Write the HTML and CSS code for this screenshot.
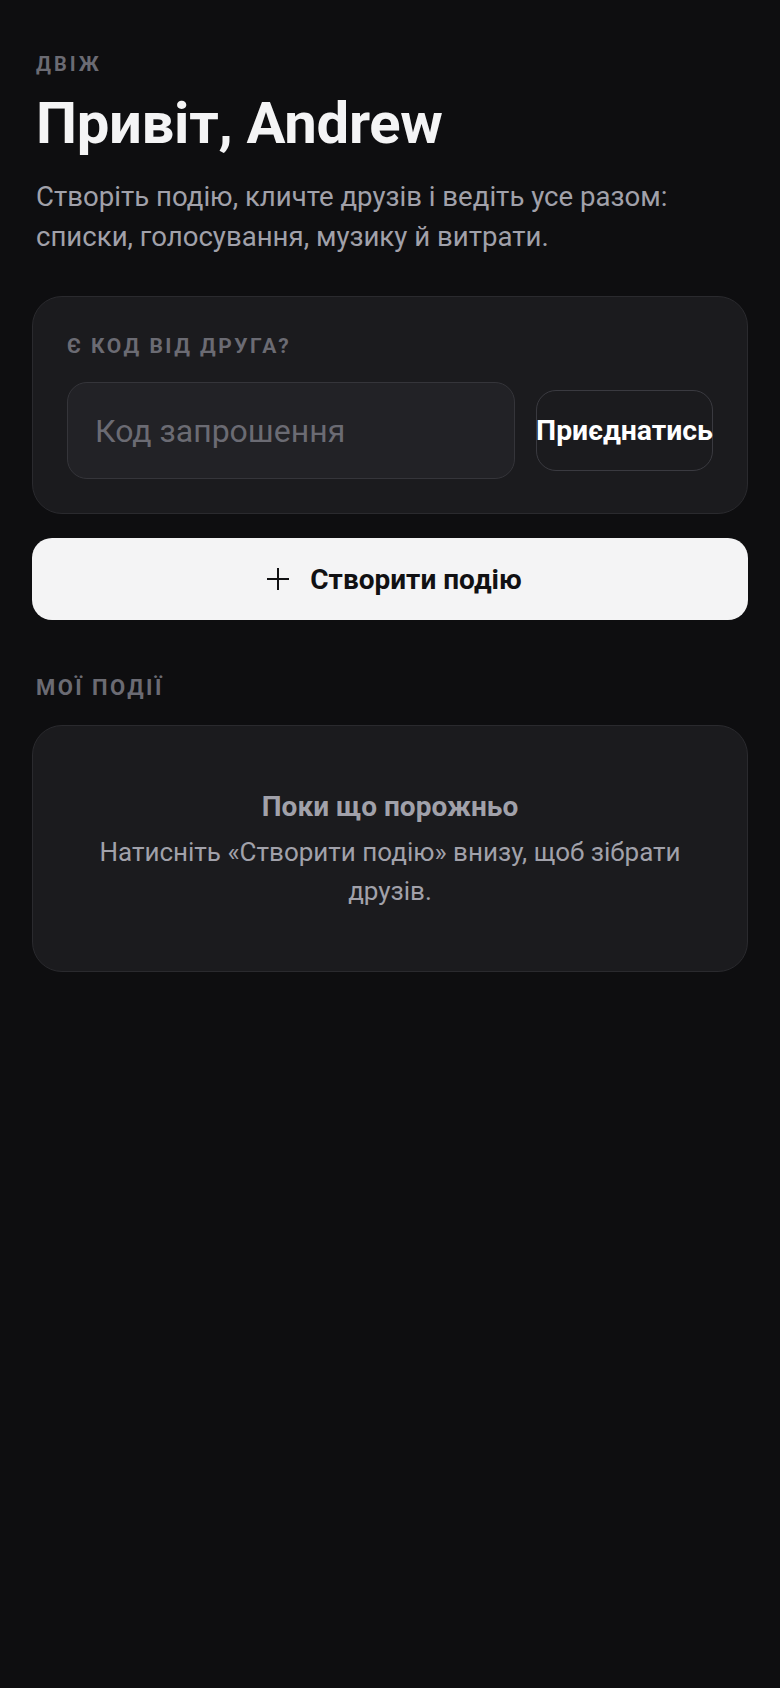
FILE: index.html
```html
<!DOCTYPE html>
<html lang="uk">
<head>
<meta charset="utf-8">
<meta name="viewport" content="width=device-width, initial-scale=1">
<title>Двіж</title>
<link rel="stylesheet" href="styles.css">
</head>
<body>
<main class="page">
  <header class="hero">
    <div class="brand">Двіж</div>
    <h1 class="title">Привіт, Andrew</h1>
    <p class="lead">Створіть подію, кличте друзів і ведіть усе разом: списки, голосування, музику й витрати.</p>
  </header>

  <section class="card join">
    <div class="label">Є код від друга?</div>
    <div class="join-row">
      <input class="code-input" type="text" placeholder="Код запрошення">
      <button class="join-btn" type="button">Приєднатись</button>
    </div>
  </section>

  <button class="create-btn" type="button">
    <svg class="plus" width="24" height="24" viewBox="0 0 24 24" aria-hidden="true">
      <path d="M12 1v22M1 12h22" stroke="#111113" stroke-width="2" fill="none"/>
    </svg>
    <span>Створити подію</span>
  </button>

  <div class="section-label">Мої події</div>

  <section class="card empty">
    <div class="empty-title">Поки що порожньо</div>
    <p class="empty-text">Натисніть «Створити подію» внизу, щоб зібрати друзів.</p>
  </section>
</main>
</body>
</html>
```

FILE: styles.css
```css
* {
  box-sizing: border-box;
}

html, body {
  margin: 0;
  padding: 0;
  background: #0e0e10;
}

body {
  font-family: Roboto, "Noto Sans", "Liberation Sans", sans-serif;
  color: #f4f4f5;
  min-height: 1688px;
}

.page {
  padding: 52px 32px 40px;
  display: flex;
  flex-direction: column;
}

.hero {
  padding: 0 4px;
  display: flex;
  flex-direction: column;
}

.brand {
  font-size: 20px;
  line-height: 24px;
  font-weight: 700;
  letter-spacing: 0.15em;
  text-transform: uppercase;
  color: #6b6b73;
}

.title {
  margin: 15px 0 0;
  font-size: 58px;
  line-height: 64px;
  font-weight: 700;
  letter-spacing: -0.005em;
  color: #f4f4f5;
}

.lead {
  margin: 22px 0 0;
  font-size: 27.6px;
  line-height: 40px;
  font-weight: 400;
  color: #a1a1aa;
}

.card {
  background: #1b1b1e;
  border: 1px solid #2a2a2e;
  border-radius: 30px;
}

.join {
  margin-top: 39px;
  padding: 37px 34px 34px;
}

.label {
  font-size: 21px;
  line-height: 24px;
  font-weight: 700;
  letter-spacing: 0.12em;
  text-transform: uppercase;
  color: #6b6b73;
}

.join-row {
  margin-top: 24px;
  display: flex;
  align-items: center;
  gap: 21px;
}

.code-input {
  flex: 1;
  min-width: 0;
  height: 97px;
  padding: 0 27px;
  background: #222226;
  border: 1.5px solid #35353a;
  border-radius: 20px;
  font-family: Roboto, "Noto Sans", sans-serif;
  font-size: 32px;
  color: #f4f4f5;
  outline: none;
}

.code-input::placeholder {
  color: #6b6b73;
}

.join-btn {
  flex: none;
  width: 177px;
  height: 81px;
  padding: 0;
  background: transparent;
  border: 1.5px solid #3a3a40;
  border-radius: 20px;
  font-family: Roboto, "Noto Sans", sans-serif;
  font-size: 28.4px;
  font-weight: 700;
  color: #ffffff;
  white-space: nowrap;
  display: flex;
  align-items: center;
  justify-content: center;
  overflow: visible;
}

.create-btn {
  margin-top: 24px;
  height: 82px;
  width: 100%;
  padding: 0 0 0 8px;
  background: #f4f4f5;
  border: none;
  border-radius: 20px;
  display: flex;
  align-items: center;
  justify-content: center;
  gap: 20px;
  font-family: Roboto, "Noto Sans", sans-serif;
  font-size: 28px;
  font-weight: 700;
  color: #111113;
}

.plus {
  display: block;
  flex: none;
}

.section-label {
  margin-top: 55px;
  padding: 0 4px;
  font-size: 22px;
  line-height: 26px;
  font-weight: 700;
  letter-spacing: 0.11em;
  text-transform: uppercase;
  color: #6b6b73;
}

.empty {
  margin-top: 24px;
  padding: 64px 48px 60px;
  text-align: center;
}

.empty-title {
  font-size: 28px;
  line-height: 34px;
  font-weight: 700;
  color: #a1a1aa;
}

.empty-text {
  margin: 9px 0 0;
  font-size: 26px;
  line-height: 39px;
  font-weight: 400;
  color: #a1a1aa;
}
```
